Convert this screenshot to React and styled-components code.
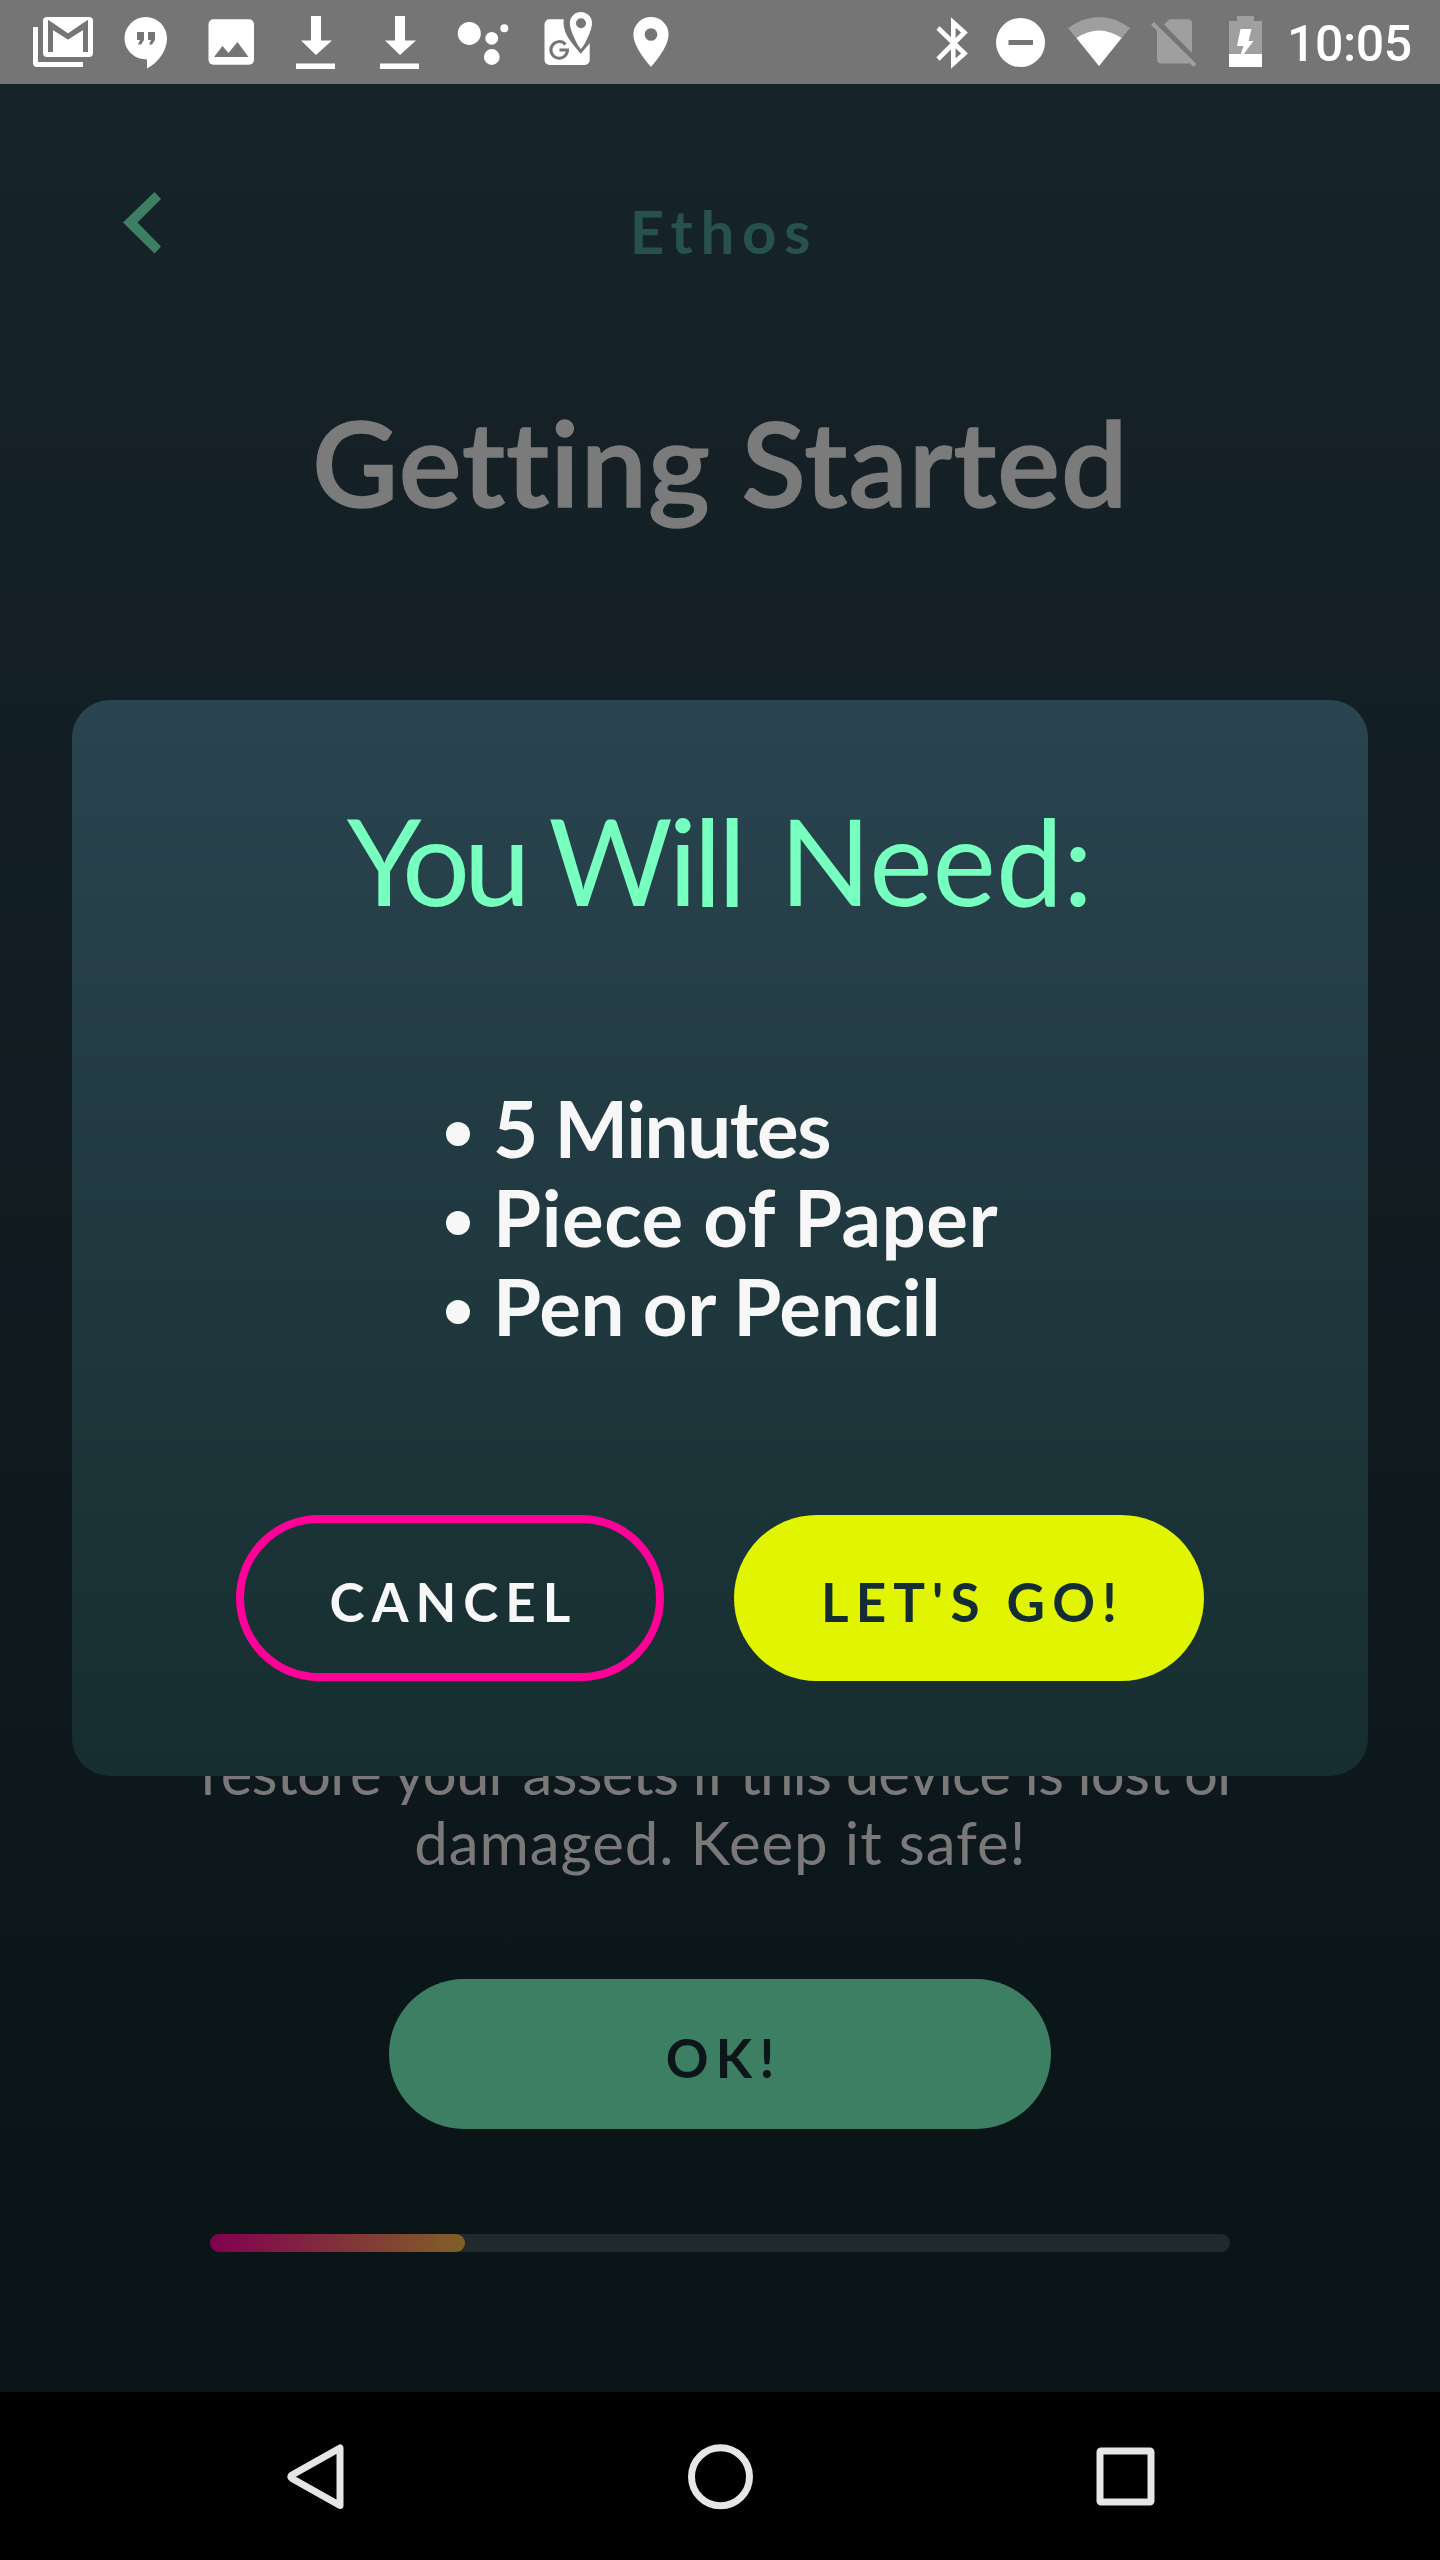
import React from "react";
import styled, { createGlobalStyle } from "styled-components";

const GlobalStyle = createGlobalStyle`
  * { box-sizing: border-box; }
  body { margin: 0; background: #000; }
  p, h1, h2, ul { margin: 0; padding: 0; }
  button { font: inherit; }
`;

const Screen = styled.div`
  position: relative;
  display: flex;
  flex-direction: column;
  width: 1440px;
  height: 2560px;
  overflow: hidden;
  font-family: Lato, "Liberation Sans", sans-serif;
`;

const StatusBar = styled.header`
  display: flex;
  justify-content: space-between;
  height: 84px;
  flex: none;
  background: #757575;
`;

const IconStrip = styled.svg`
  display: block;
  width: ${(p) => p.$w}px;
  height: 84px;
`;

const StatusRight = styled.div`
  display: flex;
`;

const Clock = styled.span`
  width: 156px;
  font: 500 50px/84px Roboto, sans-serif;
  letter-spacing: ${(p) => p.$spacing}px;
  padding: 2px 0 0 3px;
  color: #fff;
`;

const Page = styled.main`
  display: flex;
  flex-direction: column;
  align-items: center;
  flex: 1;
  padding-bottom: 140px;
  background: linear-gradient(#162329, #0d181c 75%, #0a1518 90%, #0a1518);
`;

const TopBar = styled.div`
  display: grid;
  grid-template-columns: 1fr auto 1fr;
  width: 100%;
  padding: 107px 120px 0;
`;

const Chevron = styled.svg`
  width: 44px;
  height: 64px;
`;

const Spaced = styled.span`
  display: inline-block;
  white-space: pre;
  letter-spacing: ${(p) => p.$spacing}px;
  margin-left: ${(p) => p.$before || 0}px;
  margin-right: ${(p) => -p.$spacing}px;
`;

const Brand = styled.div`
  padding-top: 4px;
  font-size: 60px;
  line-height: 72px;
  font-weight: 700;
  color: #27514f;
`;

const Heading = styled.h1`
  margin-top: 125px;
  font-size: 118px;
  line-height: 140px;
  font-weight: 600;
  font-variant-ligatures: none;
  color: #7b7b7b;
  -webkit-text-stroke: 1.5px #7b7b7b;
`;

const Copy = styled.p`
  display: flex;
  flex-direction: column;
  align-items: center;
  margin-top: auto;
  font-size: 60px;
  line-height: 70px;
  color: #7a7878;
`;

const Pill = styled.button`
  display: flex;
  align-items: center;
  justify-content: center;
  width: ${(p) => p.$w}px;
  height: ${(p) => p.$h}px;
  padding: 7px 0 0;
  border: ${(p) => (p.$border ? `8px solid ${p.$border}` : "0")};
  border-radius: 84px;
  background: ${(p) => p.$bg || "transparent"};
  color: ${(p) => p.$fg};
  font-size: 53px;
  line-height: 64px;
  font-weight: 700;
`;

const OkWrap = styled.div`
  margin: 102px 0 105px;
`;

const Track = styled.div`
  width: 1020px;
  height: 18px;
  border-radius: 9px;
  background: #1f292e;
`;

const Fill = styled.div`
  width: 25%;
  height: 100%;
  border-radius: 9px;
  background: linear-gradient(90deg, #81004f, #806026);
`;

const Overlay = styled.div`
  position: absolute;
  inset: 84px 0 168px;
  display: flex;
  align-items: center;
  justify-content: center;
`;

const Dialog = styled.section`
  display: flex;
  flex-direction: column;
  align-items: center;
  width: 1296px;
  height: 1076px;
  padding-top: 88px;
  border-radius: 38px;
  background: linear-gradient(#2a4450, #162e2f);
`;

const DialogTitle = styled.h2`
  display: flex;
  font-size: 120px;
  line-height: 144px;
  font-weight: 400;
  color: #77ffc0;
`;

const NeedList = styled.ul`
  width: 548px;
  margin-top: 152px;
  list-style: none;
  font-size: 78px;
  line-height: 89px;
  font-weight: 700;
  color: #f7f7f7;
`;

const NeedItem = styled.li`
  display: flex;
  align-items: center;
  gap: 23px;
  &::before {
    content: "";
    flex: none;
    width: 24px;
    height: 24px;
    margin-top: 11px;
    border-radius: 50%;
    background: currentColor;
  }
`;

const Actions = styled.div`
  display: flex;
  gap: 70px;
  margin-top: 164px;
`;

const NavBar = styled.nav`
  display: flex;
  justify-content: center;
  height: 168px;
  flex: none;
  background: #000;
`;

const NavIcons = styled.svg`
  width: 1440px;
  height: 168px;
`;

const Download = ({ x }) => (
  <path transform={`translate(${x} 0)`} d="M15 16h10v24.500h11L20 55 5 40.500h10zM0 63.500h39v5.500H0z" />
);

const Notifications = () => (
  <IconStrip $w={700} viewBox="0 0 700 84" fill="#fff">
    <path d="M33 27h5v35h45v5H37a4 4 0 0 1-4-4z" />
    <rect x="43" y="17" width="50" height="40" rx="4" />
    <path d="M50.500 52V24.500L68 36.500l17.500-12V52" fill="none" stroke="#757575" strokeWidth="5" />
    <path d="M48 22h3l17 11.500L85 22h3v5L68 39.500 48 27z" fill="#757575" />
    <path d="M146 17a21.300 21.300 0 0 0-21.500 21.300C124.500 50 134 59.500 147 59.500V68.500C158 63 167 51 167 38.300A21.300 21.300 0 0 0 146 17z" />
    <path d="M137 32h7v8l-3 4.500h-3l2-4.500h-3zM148 32h7v8l-3 4.500h-3l2-4.500h-3z" fill="#757575" />
    <rect x="208.500" y="19.300" width="45.500" height="45.500" rx="5" />
    <path d="M214 57l8.500-11 6 7 9-11 11 15z" fill="#757575" />
    <Download x={296} />
    <Download x={380} />
    <circle cx="469.300" cy="33.400" r="11.500" />
    <circle cx="491.700" cy="38.300" r="6.400" />
    <circle cx="504.300" cy="28.200" r="4" />
    <circle cx="491.800" cy="57" r="7.900" />
    <path d="M549.500 19.300H565.500C563 32 570 40 580.700 51L589.700 41V60a5 5 0 0 1-5 5H549.500a5 5 0 0 1-5-5V24.300a5 5 0 0 1 5-5z" />
    <path d="M565.500 44.500A8.300 8.300 0 1 0 567.500 50H559.500" fill="none" stroke="#757575" strokeWidth="3" />
    <path fillRule="evenodd" d="M581 12a11.200 11.200 0 0 0-11.200 11.200C569.800 32 581 50.500 581 50.500S592 32 592 23.200A11.200 11.200 0 0 0 581 12zm0 6.200a5 5 0 1 1 0 10 5 5 0 0 1 0-10z" />
    <path d="M565.200 19C563.500 33 573 42 580.800 51.500L590 40.500" fill="none" stroke="#757575" strokeWidth="3" />
    <path fillRule="evenodd" d="M651 17a17.600 17.600 0 0 0-17.600 17.600C633.400 48 651 67 651 67s17.600-19 17.600-32.400A17.600 17.600 0 0 0 651 17zm0 11.200a6.300 6.300 0 1 1 0 12.600 6.300 6.300 0 0 1 0-12.600z" />
  </IconStrip>
);

const SystemIcons = () => (
  <IconStrip $w={360} viewBox="924 0 360 84" fill="#fff">
    <path d="M938 28L964.500 53.500 953.300 63.500V22.500L964.500 32.500 938 59" fill="none" stroke="#fff" strokeWidth="4.600" />
    <path fillRule="evenodd" d="M1020.500 18a24.500 24.500 0 1 1 0 49 24.500 24.500 0 0 1 0-49zM1008.500 40v5h24.500v-5z" />
    <path d="M1099 66L1068 28Q1099 6 1130 28z" fill="#9f9f9f" />
    <path d="M1099 66L1076.500 38Q1099 23 1121.500 38z" />
    <path d="M1164 24.500L1169.500 19.300H1188a4 4 0 0 1 4 4V53zM1157 29L1190 63.500H1161a4 4 0 0 1-4-4z" fill="#9f9f9f" />
    <path d="M1152.500 23.500L1195 65.500" stroke="#9f9f9f" strokeWidth="4" />
    <path d="M1229 21h8v-5h17v5h8v33h-33z" fill="#9f9f9f" />
    <path d="M1229 54h33v13h-33z" />
    <path d="M1240.500 29H1251.500L1248.500 41H1253.500L1243 55H1240.500L1243.500 46H1237z" />
  </IconStrip>
);

const needs = [
  { text: "5 Minutes", spacing: -1.4 },
  { text: "Piece of Paper", spacing: 0.5 },
  { text: "Pen or Pencil", spacing: -0.3 },
];

export default function App() {
  return (
    <Screen>
      <GlobalStyle />
      <StatusBar>
        <Notifications />
        <StatusRight>
          <SystemIcons />
          <Clock $spacing={-0.4}>10:05</Clock>
        </StatusRight>
      </StatusBar>
      <Page>
        <TopBar>
          <Chevron viewBox="0 0 44 64">
            <path d="M34.500 1L41 8 17.500 31.500 41 55.500 34.500 62.500 3 31.500z" fill="#3d7f62" />
          </Chevron>
          <Brand><Spaced $spacing={7.6}>Ethos</Spaced></Brand>
        </TopBar>
        <Heading><Spaced $spacing={1.1}>Getting Started</Spaced></Heading>
        <Copy>
          <Spaced $spacing={-0.9}>restore your assets if this device is lost or</Spaced>
          <Spaced $spacing={0.9}>damaged. Keep it safe!</Spaced>
        </Copy>
        <OkWrap>
          <Pill $w={662} $h={150} $bg="#3d7f62" $fg="#0b151a">
            <Spaced $spacing={7.3}>OK!</Spaced>
          </Pill>
        </OkWrap>
        <Track><Fill /></Track>
      </Page>
      <NavBar>
        <NavIcons viewBox="0 0 1440 168" fill="none" stroke="#e6e6e6" strokeWidth="7" strokeLinejoin="round">
          <path d="M340 56V113.500L292 86.500Q289.500 84.700 292 83z" />
          <circle cx="720.500" cy="84.700" r="29" />
          <rect x="1100" y="59" width="51" height="51" rx="1" />
        </NavIcons>
      </NavBar>
      <Overlay>
        <Dialog>
          <DialogTitle>
            <Spaced $spacing={-6.5}>You</Spaced>
            <Spaced $spacing={-3.8} $before={18}>Will</Spaced>
            <Spaced $spacing={0} $before={33}>Need:</Spaced>
          </DialogTitle>
          <NeedList>
            {needs.map((n) => (
              <NeedItem key={n.text}><Spaced $spacing={n.spacing}>{n.text}</Spaced></NeedItem>
            ))}
          </NeedList>
          <Actions>
            <Pill $w={428} $h={166} $border="#ff0099" $fg="#f7f7f7">
              <Spaced $spacing={7}>CANCEL</Spaced>
            </Pill>
            <Pill $w={470} $h={166} $bg="#e2f500" $fg="#142c33">
              <Spaced $spacing={7.1}>LET'S GO!</Spaced>
            </Pill>
          </Actions>
        </Dialog>
      </Overlay>
    </Screen>
  );
}
